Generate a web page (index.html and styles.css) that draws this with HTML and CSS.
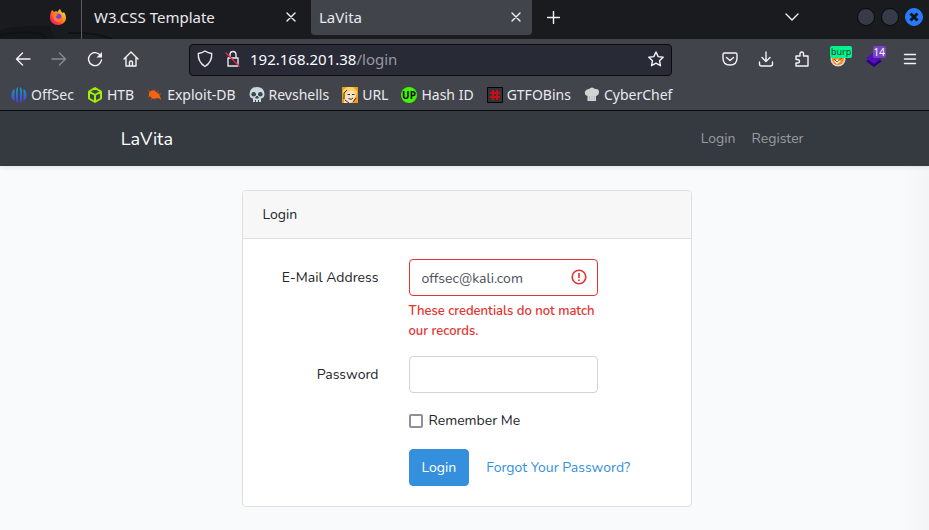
FILE: index.html
```html
<!DOCTYPE html>
<html lang="en">
<head>
<meta charset="utf-8">
<title>LaVita</title>
<link rel="stylesheet" href="styles.css">
</head>
<body>
<header class="browser">
  <div class="tabs">
    <svg class="tabs-art" viewBox="0 0 190 39" aria-hidden="true"><path d="M0 30Q20 25 50 26L54 39H0Z" fill="#15161a"/><path d="M0 35Q20 30 42 34L46 39M68 33Q95 32 112 39" fill="none" stroke="#111216" stroke-width="2"/></svg>
    <div class="pinned">
      <svg width="18" height="18" viewBox="0 0 18 18" aria-label="Firefox"><defs><linearGradient id="ff" x1="1" y1="0" x2="0" y2="1"><stop offset="0" stop-color="#fff44f"/><stop offset=".4" stop-color="#ff980e"/><stop offset=".7" stop-color="#ff3647"/><stop offset="1" stop-color="#e31587"/></linearGradient></defs><path d="M2 4L3 2 5 4 7 3 9 4Q9 2 11 1 12 4 14 5L15 4Q17 7 17 10A8 7 0 0 1 1 10Q1 6 2 4Z" fill="url(#ff)"/><circle cx="9" cy="9" r="3.500" fill="#7542e5"/><path d="M3 6Q6 4 9 7L7 8Q7 11 10 11 12 11 13 8 15 14 9 14 4 13 3 6Z" fill="#ff7b22"/></svg>
    </div>
    <div class="tab tab-first"><span>W3.CSS Template</span><button class="icon-btn" aria-label="Close W3.CSS Template"><svg width="10" height="10" viewBox="0 0 10 10"><path d="M1 1l8 8M9 1L1 9"/></svg></button></div>
    <div class="tab tab-active"><span>LaVita</span><button class="icon-btn" aria-label="Close LaVita"><svg width="10" height="10" viewBox="0 0 10 10"><path d="M1 1l8 8M9 1L1 9"/></svg></button></div>
    <button class="icon-btn new-tab" aria-label="New tab"><svg width="13" height="13" viewBox="0 0 13 13"><path d="M6.500 .5v12M.5 6.500h12"/></svg></button>
    <button class="icon-btn tab-list" aria-label="List tabs"><svg width="14" height="8" viewBox="0 0 14 8"><path d="M1 1l6 6 6-6"/></svg></button>
    <div class="window-buttons">
      <button class="dot" aria-label="Minimize"></button>
      <button class="dot" aria-label="Maximize"></button>
      <button class="dot dot-close" aria-label="Close"><svg width="10" height="10" viewBox="0 0 10 10"><path d="M1.500 1.500l7 7M8.500 1.500l-7 7"/></svg></button>
    </div>
  </div>

  <div class="toolbar">
    <div class="nav-buttons">
      <button class="icon-btn" aria-label="Back"><svg width="16" height="16" viewBox="0 0 16 16"><path d="M15 8H2M7.500 2L1.500 8l6 6"/></svg></button>
      <button class="icon-btn faded" aria-label="Forward"><svg width="16" height="16" viewBox="0 0 16 16"><path d="M1 8h13M8.500 2l6 6-6 6"/></svg></button>
      <button class="icon-btn" aria-label="Reload"><svg width="16" height="16" viewBox="0 0 16 16"><path d="M13.500 4.500A6.500 6.500 0 1 0 14.500 9"/><path d="M15 1v5.500H9.500Z" class="solid"/></svg></button>
      <button class="icon-btn" aria-label="Home"><svg width="16" height="16" viewBox="0 0 16 16"><path d="M1 8L8 1l7 7M3 7v8h10V7M6.500 15v-4q0-1 1.500-1t1.500 1v4"/></svg></button>
    </div>
    <div class="address">
      <svg class="line" width="16" height="18" viewBox="0 0 16 18"><path d="M8 1q3 2 6.700 2.500.5 8.500-6.700 13Q.8 12 1.300 3.500 5 3 8 1Z"/></svg>
      <svg class="line" width="16" height="18" viewBox="0 0 16 18"><path d="M3 8h10v8H3ZM5 8V5q0-3.500 3-3.500T11 5v3"/><path class="strike" d="M1 3l13 13"/></svg>
      <div class="url">192.168.201.38<span>/login</span></div>
      <button class="icon-btn" aria-label="Bookmark this page"><svg width="16" height="16" viewBox="0 0 16 16"><path d="M8 1l2.200 4.600 5 .6-3.700 3.500 1 5L8 12.200 3.500 14.700l1-5L.8 6.200l5-.6Z"/></svg></button>
    </div>
    <div class="extensions">
      <button class="icon-btn" aria-label="Pocket"><svg width="16" height="16" viewBox="0 0 16 16"><path d="M2.500 2h11Q15 2 15 3.500V7q0 7-7 7T1 7V3.500Q1 2 2.500 2ZM4.500 6.500L8 9.500l3.500-3"/></svg></button>
      <button class="icon-btn" aria-label="Downloads"><svg width="16" height="16" viewBox="0 0 16 16"><path d="M8 1v9M4 6.500l4 4 4-4M1.500 11v2q0 2 2 2h9q2 0 2-2v-2"/></svg></button>
      <button class="icon-btn" aria-label="Extensions"><svg width="16" height="16" viewBox="0 0 16 16"><path d="M2 15V12h1.500q2 0 2-1.700T3.500 8.500H2V5h4V3q0-2 1.800-2T9.500 3v2H14v10Z"/></svg></button>
      <button class="icon-btn badged" aria-label="FoxyProxy"><svg class="color" width="16" height="16" viewBox="0 0 16 16"><circle cx="8" cy="8" r="7.500" fill="#ddd9cc"/><circle cx="8" cy="8" r="6" fill="#f18b24"/><path d="M4 10q3-3 7 0l-4 3Z" fill="#fff"/><path d="M4 8l3 3 5-4" stroke="#855124" fill="none"/></svg><span class="badge badge-burp">burp</span></button>
      <button class="icon-btn badged" aria-label="Wappalyzer"><svg class="color" width="16" height="16" viewBox="0 0 16 16"><path d="M0 10l8-4 8 4-8 6Z" fill="#26007f"/><path d="M0 7l8-6 8 6-8 6Z" fill="#5410b8"/></svg><span class="badge badge-count">14</span></button>
      <button class="icon-btn" aria-label="Menu"><svg width="16" height="12" viewBox="0 0 16 12"><path d="M2.500 1.500h11M2.500 6h11M2.500 10.500h11"/></svg></button>
    </div>
  </div>

  <nav class="bookmarks" aria-label="Bookmarks">
    <a href="#"><svg width="16" height="16" viewBox="0 0 16 16"><defs><linearGradient id="os" x1="0" y1="0" x2="0" y2="1"><stop offset="0" stop-color="#08a5b5"/><stop offset="1" stop-color="#5536ee"/></linearGradient></defs><path d="M7 0v16Q5 15 5 12V4Q5 1 7 0ZM9 0v16Q11 15 11 12V4Q11 1 9 0ZM3.500 2v12Q0 12 .5 7.500 1 3 3.500 2ZM12.500 2v12Q16 12 15.500 7.500 15 3 12.500 2Z" fill="url(#os)"/></svg>OffSec</a>
    <a href="#"><svg width="16" height="16" viewBox="0 0 16 16"><path d="M8 1l6 3.500v7L8 15l-6-3.500v-7ZM2 4.500L8 8l6-3.500M8 8v7" fill="none" stroke="#9fef00" stroke-width="2" stroke-linejoin="round"/></svg>HTB</a>
    <a href="#"><svg width="16" height="16" viewBox="0 0 16 16"><path d="M2 6q2-4 6-2l4 3 2 5-4-1-4 1-4-3Z" fill="#f26411"/><path d="M3 5L1 3M7 4l1-2M10 5l2-1M12 7l2 0M4 9l-3 1M6 11l-2 2M9 11l-1 2M13 12l1 1" fill="none" stroke="#b64c18"/></svg>Exploit-DB</a>
    <a href="#"><svg width="16" height="16" viewBox="0 0 16 16"><path d="M8 0Q15 0 15.500 7q0 4-3.500 4.500V15H4v-3.500Q.5 11 .5 7 1 0 8 0Z" fill="#cfd8dd"/><circle cx="4.700" cy="7.300" r="2.300" fill="#37474f"/><circle cx="11.300" cy="7.300" r="2.300" fill="#37474f"/><path d="M8 9l1.500 2h-3ZM6.500 13v3M9.500 13v3" fill="#37474f" stroke="#37474f"/></svg>Revshells</a>
    <a href="#"><svg width="16" height="16" viewBox="0 0 16 16"><path d="M0 0h16v16H0Z" fill="#f39a18"/><path d="M2 16L3 5l4-3 6 1 1 6-3 6-3 1Z" fill="#f4dfc7"/><path d="M1 10V3l4-3h6l4 4v5l-2-4-4-2-5 3-1 5Z" fill="#ffd15a"/><path d="M2 12V6l3-3M5.500 7.500h2.500M10 7.500h2.500M6.500 11.500q3 2 4.500-.5M3 13l4 3M14 11l-3 4" fill="none" stroke="#432a18"/></svg>URL</a>
    <a href="#"><svg width="16" height="16" viewBox="0 0 16 16"><circle cx="8" cy="8" r="8" fill="#42f500"/><text class="up" x="8" y="12" text-anchor="middle">UP</text></svg>Hash ID</a>
    <a href="#"><svg width="16" height="16" viewBox="0 0 16 16"><path d="M.5.5h15v15H.5Z" fill="#303238" stroke="#050505"/><path d="M6 3v10M10 3v10M3 6h10M3 10h10" stroke="#c90d14" stroke-width="2"/></svg>GTFOBins</a>
    <a href="#"><svg width="16" height="16" viewBox="0 0 16 16"><path d="M3.500 14V9Q0 8 1 4.500 2 2 5 2q3-3 6 0 4-.5 4 3 0 3-3 4v5Z" fill="#d3d3d3"/><path d="M5.500 9v4M8 9v4M10.500 9v4" stroke="#bbb"/></svg>CyberChef</a>
  </nav>
</header>

<div class="page">
  <nav class="site-nav" aria-label="Site">
    <div class="container">
      <a class="brand" href="#">LaVita</a>
      <a class="nav-link" href="#">Login</a>
      <a class="nav-link" href="#">Register</a>
    </div>
  </nav>
  <main>
    <section class="card">
      <h1>Login</h1>
      <form>
        <label class="field-label" for="email">E-Mail Address</label>
        <div class="field">
          <div class="input-wrap">
            <input class="text-input invalid" id="email" type="email" value="offsec@kali.com" aria-describedby="error">
            <svg class="alert" width="16" height="16" viewBox="0 0 16 16" aria-hidden="true"><circle cx="8" cy="8" r="6.800"/><path d="M8 4v5M8 10.500v1.500"/></svg>
          </div>
          <p class="error" id="error">These credentials do not match our records.</p>
        </div>
        <label class="field-label" for="password">Password</label>
        <div class="field"><input class="text-input" id="password" type="password"></div>
        <div class="field remember"><input id="remember" type="checkbox"><label for="remember">Remember Me</label></div>
        <div class="actions"><button class="submit" type="button">Login</button><a href="#">Forgot Your Password?</a></div>
      </form>
    </section>
  </main>
</div>
</body>
</html>
```
FILE: styles.css
```css
* { box-sizing: border-box; }
body {
  margin: 0;
  min-height: 100vh;
  display: flex;
  flex-direction: column;
  background: #f8fafc;
  color: #212529;
  font: 14px/24px "Nunito", "Open Sans", sans-serif;
}
a { text-decoration: none; }
svg { flex: none; display: block; }

.browser { color: #e9e9ed; background: #42444c; border-bottom: 1px solid #0c0c0d; font: 15px/20px "Noto Sans", sans-serif; }
.icon-btn { padding: 0; border: 0; background: none; color: #f3f3f5; font: inherit; }
.icon-btn svg:not(.color), .line { fill: none; stroke: currentColor; stroke-width: 1.4; stroke-linecap: round; stroke-linejoin: round; }
.icon-btn .solid { fill: currentColor; stroke: none; }
.faded { opacity: .4; }

.tabs { position: relative; display: flex; align-items: center; height: 39px; padding-right: 6px; background: #1a1b1f; }
.tabs-art { position: absolute; left: 0; top: 0; width: 190px; height: 39px; }
.pinned { position: relative; display: flex; justify-content: flex-end; width: 82px; height: 39px; padding: 8px 14px 0 0; border-right: 1px solid #5b5c61; }
.tab { position: relative; display: flex; align-items: center; align-self: flex-start; justify-content: space-between; height: 35px; padding-bottom: 2px; }
.tab-first { width: 229px; padding-left: 12px; padding-right: 15px; }
.tab-active { width: 221px; padding-left: 8px; padding-right: 11px; border-radius: 0 0 4px 4px; background: #42444c; }
.new-tab { margin: 0 0 4px 15px; }
.tab-list { margin: 0 58px 6px auto; }
.window-buttons { display: flex; gap: 6px; margin-bottom: 5px; }
.dot { display: flex; align-items: center; justify-content: center; width: 18px; height: 18px; padding: 0; border: 1px solid #08090b; border-radius: 50%; background: #373b47; }
.dot-close { border-color: #277bff; background: #277bff; }
.dot-close path { stroke: #14151a; stroke-width: 3; }

.toolbar { display: flex; align-items: center; height: 41px; padding: 0 11px 0 15px; }
.nav-buttons { display: flex; gap: 20px; margin: 0 50px 1px 0; }
.address { display: flex; align-items: center; gap: 12px; flex: 1; max-width: 483px; height: 32px; padding: 0 7px 2px; border: 1px solid #0c0c0d; border-radius: 4px; background: #282a36; color: #e9e9ed; }
.address .strike { stroke: #e22850; }
.url { flex: 1; margin-left: -3px; color: #fbfbfe; }
.url span { color: #9899a0; }
.extensions { display: flex; align-items: center; gap: 20px; margin: 0 0 2px auto; }
.badged { position: relative; }
.badge { position: absolute; top: -5px; height: 12px; border-radius: 2px; font-size: 10px; line-height: 12px; text-align: left; }
.badge-burp { left: 0; padding: 0 1px; font-size: 9px; background: #00f58d; color: #163e2d; }
.badge-count { right: -4px; padding: 0 1px; background: #7845c5; color: #fff; }

.bookmarks { display: flex; align-items: center; gap: 13px; height: 30px; padding: 0 11px; font-size: 14px; white-space: nowrap; }
.bookmarks a { display: flex; align-items: center; gap: 4px; color: #e9e9ed; }
.up { font: bold 10px "Noto Sans", sans-serif; fill: #050505; }

.page { flex: 1; background: linear-gradient(to left, #f3f5f7, #f8fafc 28px); }
.site-nav { background: #343a40; box-shadow: 0 2px 4px rgba(0, 0, 0, .08); }
.container { display: flex; align-items: center; gap: 16px; height: 55px; margin: 0 13.500% 0 13%; }
.brand { margin-right: auto; color: #fff; font-size: 18px; }
.nav-link { color: #999ca0; }

main { padding: 24px 14px 24px 18px; }
.card { max-width: 450px; margin: 0 auto; border: 1px solid #dfdfdf; border-radius: 4px; background: #fff; }
.card h1 { margin: 0; padding: 12px 20px 11px; border-bottom: 1px solid #dfdfdf; border-radius: 3px 3px 0 0; background: #f7f7f7; font: inherit; }
form { display: grid; grid-template-columns: 136px minmax(0, 1fr); column-gap: 30px; padding: 20px; padding-left: 0; }
.field-label { padding-top: 7px; text-align: right; }
.field { grid-column: 2; width: 189px; margin-bottom: 15px; }
.input-wrap { position: relative; }
.text-input { display: block; width: 100%; height: 37px; padding: 1px 12px 0; border: 1px solid #ced4da; border-radius: 4px; background: #fff; color: #495057; font: inherit; }
.invalid { padding-right: 32px; border-color: #e3342f; }
.alert { position: absolute; right: 11px; top: 10px; fill: none; stroke: #e3342f; stroke-width: 1.6; }
.error { margin: 5px 0 0; color: #e3342f; font-size: 13px; line-height: 20px; font-weight: 600; }
.remember { display: flex; align-items: center; gap: 6px; margin: 1px 0 16px; }
.remember input { appearance: none; width: 14px; height: 14px; margin: 0; border: 2px solid #8f8f9d; border-radius: 2px; background: #fff; }
.actions { grid-column: 2; display: flex; align-items: center; gap: 17px; white-space: nowrap; }
.actions a { color: #3490dc; }
.submit { height: 37px; padding: 0 12px; border: 1px solid #3490dc; border-radius: 4px; background: #3490dc; color: #fff; font: inherit; }
```
